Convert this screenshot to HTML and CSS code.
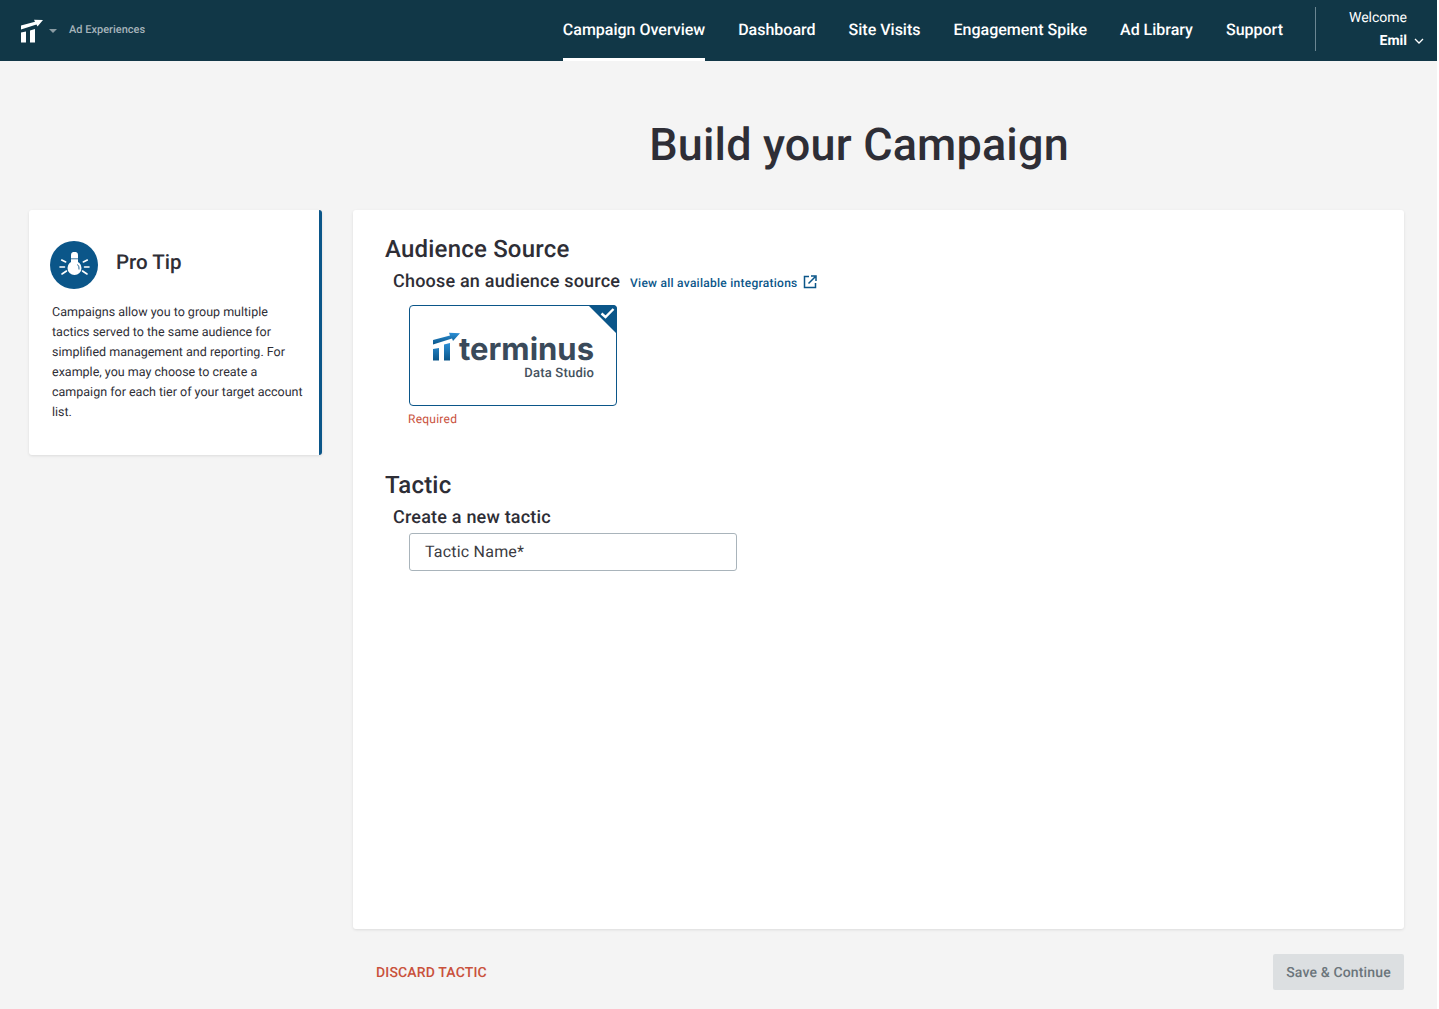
FILE: index.html
```html
<!DOCTYPE html>
<html lang="en">
<head>
<meta charset="utf-8">
<title>Build your Campaign</title>
<link rel="stylesheet" href="styles.css">
</head>
<body>
<div class="app">
<header class="topbar">
  <div class="brand">
    <svg class="brand-logo" width="24" height="25" viewBox="0 0 24 25"><path fill="#fff" d="M1 10.500 L1 6.500 L15 2.800 L14 0.800 L23 1 L17.500 7.500 L16.500 5.500 Z"/><path fill="#fff" d="M1 13.500 L6 12.500 V23.500 H1 Z M10 11.500 L15 10 V23.500 H10 Z"/></svg>
    <span class="brand-caret"></span>
    <span class="brand-name">Ad Experiences</span>
  </div>
  <nav class="nav">
    <a class="nav-item active">Campaign Overview</a>
    <a class="nav-item">Dashboard</a>
    <a class="nav-item">Site Visits</a>
    <a class="nav-item">Engagement Spike</a>
    <a class="nav-item">Ad Library</a>
    <a class="nav-item">Support</a>
  </nav>
  <div class="user">
    <span class="welcome">Welcome</span>
    <span class="user-name">Emil
      <svg width="10" height="6" viewBox="0 0 10 6"><path d="M1 1l4 4 4-4" fill="none" stroke="#fff" stroke-width="1.300"/></svg>
    </span>
  </div>
</header>
<main class="page">
  <h1 class="title">Build your Campaign</h1>
  <div class="columns">
    <aside class="tip">
      <div class="tip-head">
        <span class="tip-icon">
          <svg width="32" height="32" viewBox="0 0 32 32">
            <circle cx="16.500" cy="19" r="7" fill="#fff"/>
            <path d="M13 14 V5.500 Q13 3.500 15 3 H18 Q20 3.500 20 5.500 V14 Z" fill="#fff"/>
            <path d="M13 9.800 H20" stroke="#0b5689" stroke-width="0.800"/>
            <path d="M19.500 15.500 Q21.500 17.500 21 20.500" fill="none" stroke="#0b5689" stroke-width="0.900"/>
            <path d="M2 18 H6.500 M26.500 18 H31 M3.700 11 L7.700 13 M29.300 11 L25.300 13 M4 25 L8.500 22 M29 25 L24.500 22" stroke="#fff" stroke-width="1.600" stroke-linecap="round"/>
          </svg>
        </span>
        <h2 class="tip-title">Pro Tip</h2>
      </div>
      <p class="tip-text">Campaigns allow you to group multiple tactics served to the same audience for simplified management and reporting. For example, you may choose to create a campaign for each tier of your target account list.</p>
    </aside>
    <div class="main-col">
      <section class="card">
        <h2 class="section-title">Audience Source</h2>
        <div class="sub-row">
          <h3 class="sub-title">Choose an audience source</h3>
          <a class="link">View all available integrations
            <svg class="link-icon" width="14" height="14" viewBox="0 0 14 14"><path d="M6 1.500H1.500V12.500H12.500V8" fill="none" stroke="#0b5689" stroke-width="1.500"/><path d="M5.500 8.500L12 2M8 1h5v5" fill="none" stroke="#0b5689" stroke-width="1.500"/></svg>
          </a>
        </div>
        <div class="source">
          <svg class="corner" width="29" height="29" viewBox="0 0 29 29"><path d="M0 0H25Q29 0 29 4V29Z" fill="#0b5689"/><path d="M13.500 8.500l4 3.500 8-8" fill="none" stroke="#fff" stroke-width="2.400"/></svg>
          <div class="logo">
            <svg class="logo-mark" width="28" height="29" viewBox="0 0 28 29">
              <defs><linearGradient id="g" x1="0" y1="1" x2="0" y2="0"><stop offset="0" stop-color="#0b5689"/><stop offset="1" stop-color="#2b8fd6"/></linearGradient></defs>
              <path fill="url(#g)" d="M0 12.500 V8 L17 3.500 L16 0.800 L27 1.200 L20 9 L19 6.500 Z"/>
              <path fill="url(#g)" d="M0 17 L6 16 V28.500 H0 Z M11 12.500 L17 11 V28.500 H11 Z"/>
            </svg>
            <div class="logo-words">
              <span class="logo-name">terminus</span>
              <span class="logo-sub">Data Studio</span>
            </div>
          </div>
        </div>
        <p class="error">Required</p>
        <h2 class="section-title tactic-title">Tactic</h2>
        <h3 class="sub-title tactic-sub">Create a new tactic</h3>
        <div class="input">Tactic Name*</div>
      </section>
      <div class="actions">
        <button class="discard">DISCARD TACTIC</button>
        <button class="save">Save &amp; Continue</button>
      </div>
    </div>
  </div>
</main>
</div>
</body>
</html>
```
FILE: styles.css
```css
* { box-sizing: border-box; }
html, body { margin: 0; padding: 0; }
body {
  background: #fff;
  font-family: Roboto, "Liberation Sans", sans-serif;
  color: #2e2e36;
  text-rendering: geometricPrecision;
}
.app {
  width: 1437px;
  height: 1009px;
  overflow: hidden;
  background: #f4f4f4;
}
.topbar {
  display: flex;
  align-items: stretch;
  height: 61px;
  background: #113747;
  color: #fff;
}
.brand { display: flex; align-items: center; padding-left: 20px; flex: 1; }
.brand-logo { margin-top: 1px; }
.brand-caret {
  width: 0; height: 0;
  margin-left: 5px;
  border: 4px solid transparent;
  border-top: 4px solid #8a9ba3;
  border-bottom: 0;
}
.brand-name { margin: -2px 0 0 12px; font-size: 11px; color: #a6b4bb; font-weight: 500; }
.nav { display: flex; gap: 33px; }
.nav-item {
  display: flex;
  align-items: center;
  height: 61px;
  font-size: 16px;
  font-weight: 500;
  border-bottom: 3px solid transparent;
}
.nav-item.active { border-bottom-color: #fff; }
.user {
  width: 122px;
  margin: 7px 0 10px 32px;
  padding: 4px 13px 0 0;
  border-left: 1px solid #6b8692;
  display: flex;
  flex-direction: column;
  align-items: flex-end;
  font-size: 14px;
}
.welcome { margin-right: 17px; line-height: 15px; }
.user-name { margin-top: 7px; line-height: 16px; font-weight: 700; display: flex; align-items: center; gap: 7px; }
.page { padding: 0 33px 0 29px; }
.title {
  margin: 0 0 0 285px;
  height: 149px;
  padding-top: 55px;
  text-align: center;
  font-size: 45px;
  line-height: 57px;
  font-weight: 500;
  letter-spacing: .16px;
}
.columns { display: flex; gap: 31px; align-items: flex-start; }
.tip {
  width: 293px;
  height: 245px;
  padding: 31px 14px 0 21px;
  background: #fff;
  border-right: 3px solid #0b5689;
  border-radius: 3px;
  box-shadow: 0 1px 3px rgba(0,0,0,.1);
}
.tip-head { display: flex; align-items: center; gap: 18px; }
.tip-icon {
  display: flex; align-items: center; justify-content: center;
  width: 48px; height: 48px;
  border-radius: 50%;
  background: #0b5689;
}
.tip-title { margin: -5px 0 0; font-size: 20.500px; font-weight: 500; }
.tip-text { margin: 14px 0 0 2px; font-size: 12.500px; line-height: 20px; }
.main-col { width: 1051px; }
.card {
  height: 719px;
  padding: 24px 32px;
  background: #fff;
  border-radius: 3px;
  box-shadow: 0 1px 3px rgba(0,0,0,.1);
}
.section-title { margin: 0; font-size: 24px; line-height: 30px; font-weight: 500; letter-spacing: .2px; }
.sub-row { display: flex; align-items: center; gap: 10px; margin: 6px 0 0 8px; height: 24px; }
.sub-title { margin: 0; font-size: 18px; line-height: 24px; font-weight: 500; letter-spacing: .2px; }
.link { display: flex; align-items: center; gap: 5px; margin-top: 1px; font-size: 12px; font-weight: 500; color: #0b5689; letter-spacing: .26px; }
.link-icon { margin-top: -2px; }
.source {
  position: relative;
  width: 208px;
  height: 101px;
  margin: 11px 0 0 24px;
  border: 1px solid #0b5689;
  border-radius: 4px;
}
.corner { position: absolute; top: -1px; right: -1px; }
.logo { display: flex; align-items: flex-start; padding: 26px 0 0 23px; }
.logo-mark { flex: none; }
.logo-words { display: flex; flex-direction: column; align-items: flex-end; margin-left: -2px; }
.logo-name { font-family: Inter, sans-serif; font-size: 31px; line-height: 32px; font-weight: 700; color: #3a4a5a; margin-top: 2px; }
.logo-sub { font-size: 13px; line-height: 14px; font-weight: 500; color: #45525e; letter-spacing: .2px; margin-top: 1px; }
.error { margin: 6px 0 0 23px; font-size: 12px; line-height: 15px; color: #c9513c; letter-spacing: .25px; }
.tactic-title { margin-top: 43px; }
.tactic-sub { margin: 6px 0 0 8px; }
.input {
  width: 328px;
  height: 38px;
  margin: 3px 0 0 24px;
  padding: 0 15px 2px;
  display: flex;
  align-items: center;
  border: 1px solid #a9b4bb;
  border-radius: 3px;
  font-size: 16px;
  letter-spacing: .2px;
  color: #3b3b42;
}
.actions { display: flex; justify-content: space-between; align-items: center; margin-top: 25px; }
.discard {
  margin-left: 23px; padding: 1px 0 0; border: 0; background: none;
  font-family: inherit; font-size: 14px; font-weight: 500; color: #c9513c; letter-spacing: .15px;
  text-rendering: inherit;
}
.save {
  width: 131px; height: 36px; padding: 1px 0 0; border: 0; border-radius: 2px;
  background: #dcdfe1; color: #6b757b;
  font-family: inherit; font-size: 14px; font-weight: 500; letter-spacing: .15px;
  text-rendering: inherit;
}
```
